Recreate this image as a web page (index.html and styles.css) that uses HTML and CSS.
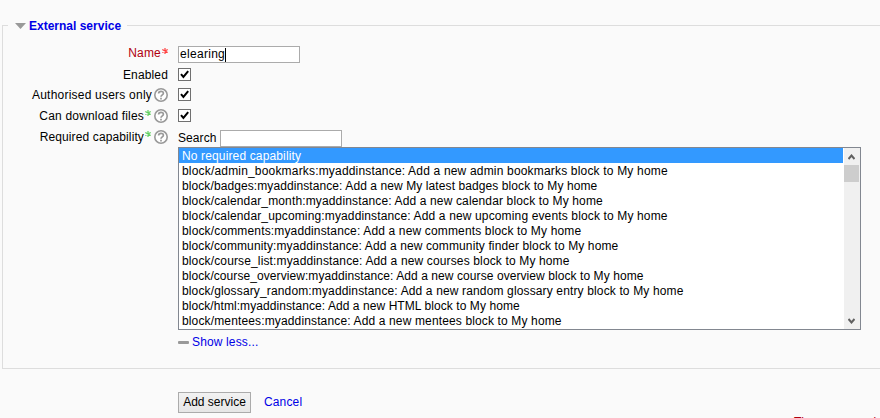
FILE: index.html
```html
<!DOCTYPE html>
<html lang="en">
<head>
<meta charset="utf-8">
<title>External service</title>
<link rel="stylesheet" href="styles.css">
</head>
<body>
<svg class="defs" aria-hidden="true">
  <symbol id="help" viewBox="0 0 14 14">
    <circle cx="7" cy="7" r="6.2" fill="#fff" stroke="#999" stroke-width="1.6"/>
    <path d="M4.6 5.6C4.6 2.6 9.4 2.6 9.4 5.3C9.4 6.9 7 6.9 7 8.8M7 9.7V11.4" fill="none" stroke="#999" stroke-width="1.7"/>
  </symbol>
  <symbol id="star" viewBox="0 0 6 6">
    <path d="M3 0V6M.3 1.4L5.7 4.6M5.7 1.4L.3 4.6" fill="none" stroke="currentColor" stroke-width="1.2"/>
  </symbol>
  <symbol id="check" viewBox="0 0 11 11">
    <path d="M2 5.2L4.4 8L9.2 2.2" fill="none" stroke="#000" stroke-width="2"/>
  </symbol>
</svg>
<form class="form">
  <section class="group">
    <div class="legend"><svg class="tri" viewBox="0 0 11 6"><path d="M0 0H11L5.5 6Z" fill="#999"/></svg><a class="title">External service</a></div>
    <div class="row name">
      <div class="label required"><span class="t-name">Name</span><svg class="star"><use href="#star"/></svg></div>
      <div class="input"><span class="t-value">elearing</span><i class="caret"></i></div>
    </div>
    <div class="row enabled">
      <div class="label"><span class="t-enabled">Enabled</span></div>
      <div class="box"><svg><use href="#check"/></svg></div>
    </div>
    <div class="row users">
      <div class="label"><span class="t-users">Authorised users only</span><svg class="help"><use href="#help"/></svg></div>
      <div class="box"><svg><use href="#check"/></svg></div>
    </div>
    <div class="row files">
      <div class="label"><span class="t-files">Can download files</span><svg class="star"><use href="#star"/></svg><svg class="help"><use href="#help"/></svg></div>
      <div class="box"><svg><use href="#check"/></svg></div>
    </div>
    <div class="row capability">
      <div class="label"><span class="t-cap">Required capability</span><svg class="star"><use href="#star"/></svg><svg class="help"><use href="#help"/></svg></div>
      <div class="search"><span class="t-search">Search</span><div class="input"></div></div>
    </div>
    <div class="list">
      <div class="options">
        <div class="option selected">No required capability</div>
        <div class="option">block/admin_bookmarks:myaddinstance: Add a new admin bookmarks block to My home</div>
        <div class="option">block/badges:myaddinstance: Add a new My latest badges block to My home</div>
        <div class="option">block/calendar_month:myaddinstance: Add a new calendar block to My home</div>
        <div class="option">block/calendar_upcoming:myaddinstance: Add a new upcoming events block to My home</div>
        <div class="option">block/comments:myaddinstance: Add a new comments block to My home</div>
        <div class="option">block/community:myaddinstance: Add a new community finder block to My home</div>
        <div class="option">block/course_list:myaddinstance: Add a new courses block to My home</div>
        <div class="option">block/course_overview:myaddinstance: Add a new course overview block to My home</div>
        <div class="option">block/glossary_random:myaddinstance: Add a new random glossary entry block to My home</div>
        <div class="option">block/html:myaddinstance: Add a new HTML block to My home</div>
        <div class="option">block/mentees:myaddinstance: Add a new mentees block to My home</div>
      </div>
      <div class="scrollbar">
        <svg class="arrow" viewBox="0 0 7 6"><path d="M.5 5L3.5 1.5L6.5 5" fill="none" stroke="#606060" stroke-width="2"/></svg>
        <div class="thumb"></div>
        <svg class="arrow down" viewBox="0 0 7 6"><path d="M.5 1L3.5 4.5L6.5 1" fill="none" stroke="#606060" stroke-width="2"/></svg>
      </div>
    </div>
    <div class="less"><i class="minus"></i><a>Show less...</a></div>
  </section>
  <div class="actions"><div class="button">Add service</div><a>Cancel</a></div>
  <div class="note">There are required</div>
</form>
</body>
</html>
```
FILE: styles.css
```css
* { box-sizing: border-box; }
body { margin: 0; height: 418px; overflow: hidden; background: #fafafa; color: #000; font: 12px/15px "Liberation Sans", Arial, sans-serif; }
svg { display: block; flex: none; }
.defs { position: absolute; width: 0; height: 0; }
a { color: #0000e6; white-space: nowrap; letter-spacing: .14px; }
.form { height: 418px; padding: 25px 0 0 2px; overflow: hidden; }
.group { height: 344px; border: 1px solid #ddd; border-right: 0; }
.legend { display: flex; align-items: center; width: 119px; height: 15px; margin: -8px 0 0 5px; padding-left: 7px; background: #fafafa; }
.tri { width: 11px; height: 6px; margin-right: 3px; }
.title { padding-top: 2px; font-weight: bold; letter-spacing: 0; }
.row { display: flex; align-items: flex-start; }
.label { display: flex; justify-content: flex-end; width: 165px; height: 15px; margin-right: 10px; white-space: nowrap; }
.name { height: 22px; margin-top: 13px; }
.name .label { color: #b0000f; }
.enabled { height: 20px; }
.users { height: 21px; }
.files { height: 21px; }
.capability { height: 17px; }
.star { width: 6px; height: 6px; margin: 1px 0 0 1px; color: #5fcf5f; }
.required .star { margin-top: 2px; color: #ff4040; }
.help { width: 14px; height: 14px; margin-left: 2px; }
.star + .help { margin-left: 3px; }
.t-name { letter-spacing: .2px; }
.t-value { letter-spacing: .3px; }
.t-enabled { letter-spacing: .15px; }
.t-users { letter-spacing: .22px; }
.t-files { letter-spacing: .18px; }
.t-cap { letter-spacing: .12px; }
.t-search { padding-top: 1px; letter-spacing: .08px; }
.input { display: flex; align-items: center; width: 122px; height: 17px; padding-left: 1px; border: 1px solid #ababab; background: #fff; }
.caret { width: 1px; height: 14px; background: #000; }
.box { width: 13px; height: 13px; border: 1px solid #707070; background: #fff; }
.box svg { width: 11px; height: 11px; }
.search { display: flex; }
.t-search { width: 42px; }
.list { display: flex; width: 683px; height: 183px; margin-left: 175px; border: 1px solid #828790; background: #fff; }
.options { width: 664px; margin-right: 1px; }
.option { height: 15px; padding: 1px 0 0 3px; line-height: 15px; white-space: nowrap; letter-spacing: .14px; }
.option:nth-child(2) { letter-spacing: .18px; }
.option:nth-child(3) { letter-spacing: .09px; }
.option:nth-child(6) { letter-spacing: .15px; }
.option:nth-child(7) { letter-spacing: .11px; }
.option:nth-child(9) { letter-spacing: .075px; }
.option:nth-child(11) { letter-spacing: .07px; }
.selected { background: #39f; color: #fff; }
.scrollbar { display: flex; flex-direction: column; width: 16px; background: #f0f0f0; }
.arrow { width: 7px; height: 6px; margin: 6px 0 5px 4px; }
.thumb { width: 15px; height: 17px; background: #cdcdcd; }
.down { margin-top: auto; }
.less { display: flex; align-items: center; gap: 3px; height: 15px; margin: 5px 0 0 175px; }
.minus { width: 11px; height: 3px; background: #999; border-radius: 1px; }
.actions { display: flex; align-items: center; gap: 13px; height: 21px; margin: 23px 0 0 176px; }
.button { width: 73px; height: 21px; border: 1px solid #ababab; background: linear-gradient(#f2f2f2, #e6e6e6); text-align: center; line-height: 19px; white-space: nowrap; }
.note { margin: 2px 0 0 792px; color: #b0000f; white-space: nowrap; }
```
